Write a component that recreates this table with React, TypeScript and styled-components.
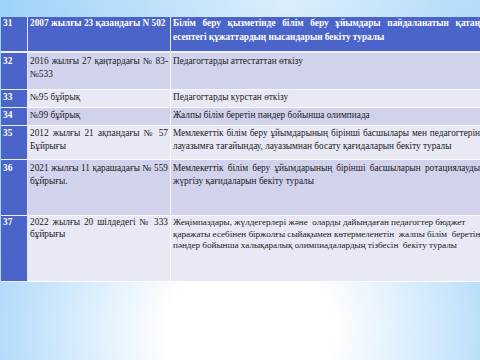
import React from "react"
import styled, { createGlobalStyle, css } from "styled-components"

const GlobalStyle = createGlobalStyle`
    html, body {
        margin: 0;
        padding: 0;
        width: 480px;
        height: 360px;
        overflow: hidden;
    }
`

const Slide = styled.div`
    width: 480px;
    height: 360px;
    overflow: hidden;
    box-sizing: border-box;
    padding: 17px 0 0 1px;
    background:
        radial-gradient(ellipse 62% 70% at 52% 92%, #ffffff 0%, #ffffff 28%, rgba(255, 255, 255, 0) 100%),
        radial-gradient(ellipse 60% 60% at 60% 0%, #dbeefb 0%, rgba(219, 238, 251, 0) 100%),
        #9fd2f8;
    font-family: "Liberation Serif", "Times New Roman", serif;
`

const Table = styled.table`
    width: 482px;
    table-layout: fixed;
    border-collapse: separate;
    border-spacing: 0;
    font-size: 9.3px;
    color: #1a1a1a;
`

const Col = styled.col<{ $w?: number }>`
    width: ${p => (p.$w ? `${p.$w}px` : "auto")};
`

type Tone = "head" | "dark" | "light"

const tones: Record<Tone, string> = {
    head: "#4b64c9",
    dark: "#d1d3ed",
    light: "#e8e9f4",
}

const Row = styled.tr<{ $tone: Tone; $h: number; $lh?: number; $pad?: number }>`
    td {
        height: ${p => p.$h}px;
        line-height: ${p => p.$lh ?? 13}px;
        padding-top: ${p => p.$pad ?? 1}px;
        background: ${p => tones[p.$tone]};
    }

    ${p =>
        p.$tone === "head" &&
        css`
            td {
                color: #ffffff;
                font-weight: 700;
                border-bottom-width: 2px;
            }
        `}
`

const Cell = styled.td<{ $align?: "justify" | "left"; $nowrap?: boolean }>`
    box-sizing: border-box;
    vertical-align: top;
    padding: 1px 2px 0 2px;
    border-right: 1px solid rgba(255, 255, 255, 0.85);
    border-bottom: 1px solid rgba(255, 255, 255, 0.9);
    text-align: ${p => p.$align ?? "justify"};
    white-space: ${p => (p.$nowrap ? "nowrap" : "normal")};
    overflow: hidden;
`

const NumCell = styled(Cell)`
    && {
        background: #4b64c9;
        color: #ffffff;
        font-weight: 700;
    }
`

// the last row's text box runs past the slide edge, so its lines are set by hand
const Line = styled.span`
    display: block;
    white-space: pre;
    font-size: 9.15px;
`

interface Entry {
    readonly num: string
    readonly act: string
    readonly title: string | string[]
    readonly tone: Tone
    readonly height: number
    readonly lineHeight?: number
    readonly pad?: number
}

const entries: Entry[] = [
    {
        num: "31",
        act: "2007 жылғы 23 қазандағы N 502",
        title: "Білім беру қызметінде білім беру ұйымдары пайдаланатын қатаң есептегі құжаттардың нысандарын бекіту туралы",
        tone: "head",
        height: 36,
        lineHeight: 13.5,
        pad: 0,
    },
    {
        num: "32",
        act: "2016 жылғы 27 қаңтардағы № 83-№533",
        title: "Педагогтарды аттестаттан өткізу",
        tone: "dark",
        height: 37,
        pad: 2,
    },
    { num: "33", act: "№95 бұйрық", title: "Педагогтарды курстан өткізу", tone: "light", height: 18 },
    {
        num: "34",
        act: "№99 бұйрық",
        title: "Жалпы білім беретін пәндер бойынша олимпиада",
        tone: "dark",
        height: 18,
    },
    {
        num: "35",
        act: "2012 жылғы 21 ақпандағы № 57 Бұйрығы",
        title: "Мемлекеттік білім беру ұйымдарының бірінші басшылары мен педагогтерін лауазымға тағайындау, лауазымнан босату қағидаларын бекіту туралы",
        tone: "light",
        height: 34,
    },
    {
        num: "36",
        act: "2021 жылғы 11 қарашадағы № 559 бұйрығы.",
        title: "Мемлекеттік білім беру ұйымдарының бірінші басшыларын ротациялауды жүргізу қағидаларын бекіту туралы",
        tone: "dark",
        height: 56,
        pad: 2,
    },
    {
        num: "37",
        act: "2022 жылғы 20 шілдедегі № 333 бұйрығы",
        title: [
            "Жеңімпаздары, жүлдегерлері және  оларды дайындаған педагогтер бюджет",
            "қаражаты есебінен біржолғы сыйақымен көтермеленетін  жалпы білім  беретін",
            "пәндер бойынша халықаралық олимпиадалардың тізбесін  бекіту туралы",
        ],
        tone: "light",
        height: 66,
        lineHeight: 11.5,
        pad: 1,
    },
]

const App = () => (
    <>
        <GlobalStyle />
        <Slide>
            <Table>
                <colgroup>
                    <Col $w={27} />
                    <Col $w={143} />
                    <Col />
                </colgroup>
                <tbody>
                    {entries.map(e => (
                        <Row key={e.num} $tone={e.tone} $h={e.height} $lh={e.lineHeight} $pad={e.pad}>
                            <NumCell>{e.num}</NumCell>
                            <Cell $align={e.tone === "head" ? "left" : "justify"} $nowrap={e.tone === "head"}>
                                {e.act}
                            </Cell>
                            {Array.isArray(e.title) ? (
                                <Cell $align="left">
                                    {e.title.map(l => (
                                        <Line key={l}>{l}</Line>
                                    ))}
                                </Cell>
                            ) : (
                                <Cell>{e.title}</Cell>
                            )}
                        </Row>
                    ))}
                </tbody>
            </Table>
        </Slide>
    </>
)

export default App
